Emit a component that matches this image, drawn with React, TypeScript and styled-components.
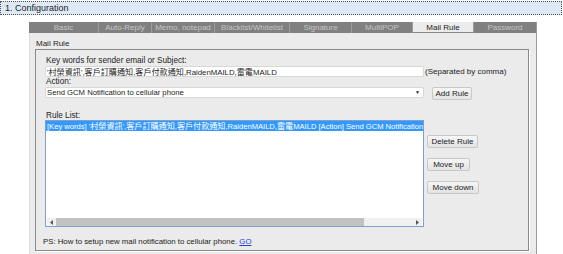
import React from "react";
import styled, { createGlobalStyle } from "styled-components";

const Global = createGlobalStyle`
  html, body { margin: 0; padding: 0; background: #ffffff; }
  body { font-family: "Liberation Sans", Arial, sans-serif; font-size: 8px; color: #222; }
  * { box-sizing: border-box; }
`;

const Page = styled.div`
  width: 563px;
  height: 254px;
  overflow: hidden;
`;

const Header = styled.div`
  width: 562px;
  height: 14px;
  margin-top: 1px;
  border: 1px dotted #555;
  background: #dde9f5;
  padding-left: 4px;
  font-size: 9px;
  line-height: 12px;
  color: #222;
`;

const Main = styled.div`
  padding: 7px 0 0 29px;
`;

const TabBar = styled.div`
  display: flex;
  width: 508px;
  height: 11px;
  background: #808080;
`;

const Tab = styled.div<{ $w: number; $active?: boolean }>`
  width: ${(p) => p.$w}px;
  height: 11px;
  text-align: center;
  line-height: 11px;
  white-space: nowrap;
  overflow: hidden;
  color: ${(p) => (p.$active ? "#222" : "#c6c6c6")};
  background: ${(p) => (p.$active ? "#ececec" : "#808080")};
  border-right: 1px solid #9c9c9c;
  border-bottom: ${(p) => (p.$active ? "1px solid #888" : "none")};
`;

const Panel = styled.div`
  width: 508px;
  height: 230px;
  background: #ebebeb;
  border-left: 1px solid #dcdcdc;
  border-right: 1px solid #9a9a9a;
  padding: 6px 0 0 5px;
`;

const Title = styled.div`
  height: 10px;
  line-height: 10px;
  padding-left: 1px;
`;

const Box = styled.div`
  width: 494px;
  height: 202px;
  border: 1px solid #8a8a8a;
  box-shadow: 1px 1px 0 #ffffff;
  padding: 6px 0 0 9px;
`;

const Label = styled.div<{ $mt?: number }>`
  height: 9px;
  line-height: 9px;
  padding-left: 1px;
  font-size: 8.2px;
  margin-top: ${(p) => p.$mt ?? 0}px;
`;

const Row = styled.div<{ $gap: number; $mt: number }>`
  display: flex;
  align-items: flex-start;
  gap: ${(p) => p.$gap}px;
  margin-top: ${(p) => p.$mt}px;
`;

const Han = styled.span`
  font-family: "Noto Sans CJK TC", sans-serif;
  font-size: 8.1px;
`;

const TextInput = styled.div`
  width: 379px;
  height: 11px;
  background: #fff;
  border: 1px solid #d8d8d8;
  border-radius: 2px;
  padding-left: 1px;
  line-height: 9px;
  font-size: 7.8px;
  white-space: nowrap;
  overflow: hidden;
`;

const Hint = styled.span`
  white-space: nowrap;
  line-height: 11px;
`;

const Select = styled.div`
  width: 379px;
  height: 11px;
  background: #fff;
  border: 1px solid #d8d8d8;
  border-radius: 2px;
  padding: 0 3px 0 1px;
  line-height: 9px;
  font-size: 7.7px;
  display: flex;
  justify-content: space-between;
`;

const Arrow = styled.span`
  font-size: 5px;
  line-height: 9px;
  color: #222;
`;

const Button = styled.div<{ $w: number }>`
  width: ${(p) => p.$w}px;
  height: 13px;
  border: 1px solid #c8c8c8;
  border-radius: 2px;
  background: linear-gradient(#f6f6f6, #e3e3e3);
  line-height: 11px;
  text-align: center;
  white-space: nowrap;
  color: #222;
  flex-shrink: 0;
`;

const ListArea = styled.div`
  display: flex;
  gap: 3px;
`;

const ListBox = styled.div`
  width: 379px;
  height: 107px;
  background: #fff;
  border: 1px solid #7f9fd0;
  flex-shrink: 0;
`;

const Items = styled.div`
  height: 97px;
  overflow: hidden;
`;

const Item = styled.div<{ $selected?: boolean }>`
  height: 10px;
  line-height: 10px;
  white-space: nowrap;
  padding-left: 1px;
  font-size: 7.6px;
  background: ${(p) => (p.$selected ? "#3399ff" : "transparent")};
  color: ${(p) => (p.$selected ? "#fff" : "#222")};
`;

const Scrollbar = styled.div`
  height: 8px;
  margin: 0 1px;
  background: #f0f0f0;
  display: flex;
  align-items: center;
`;

const ScrollArrow = styled.div`
  width: 9px;
  height: 8px;
  flex-shrink: 0;
  display: flex;
  align-items: center;
  justify-content: center;
`;

const Thumb = styled.div`
  width: 308px;
  height: 8px;
  flex-shrink: 0;
  background: #c1c1c1;
`;

const Spacer = styled.div`
  flex: 1;
`;

const Side = styled.div`
  display: flex;
  flex-direction: column;
  gap: 10px;
  padding-top: 15px;
`;

const Footer = styled.div`
  margin-top: 10px;
  margin-left: -2px;
  height: 10px;
  line-height: 10px;
  font-size: 7.8px;
`;

const Link = styled.a`
  color: #1a3fd6;
  text-decoration: underline;
`;

const tabs: [string, number][] = [
  ["Basic", 70],
  ["Auto-Reply", 53],
  ["Memo, notepad", 63],
  ["Blacklist/Whitelist", 75],
  ["Signature", 62],
  ["MultiPOP", 61],
  ["Mail Rule", 61],
  ["Password", 63],
];

const Keywords = () => (
  <>
    '<Han>村榮資訊</Han>',<Han>客戶訂購通知</Han>,<Han>客戶付款通知</Han>,RaidenMAILD,<Han>雷電</Han>MAILD
  </>
);

const Tri = ({ dir }: { dir: "l" | "r" }) => (
  <svg width="3" height="5" viewBox="0 0 3 5">
    <path d={dir === "l" ? "M3 0 L0 2.5 L3 5 Z" : "M0 0 L3 2.5 L0 5 Z"} fill="#555" />
  </svg>
);

export default function App() {
  return (
    <Page>
      <Global />
      <Header>1. Configuration</Header>
      <Main>
        <TabBar>
          {tabs.map(([t, w]) => (
            <Tab key={t} $w={w} $active={t === "Mail Rule"}>
              {t}
            </Tab>
          ))}
        </TabBar>
        <Panel>
          <Title>Mail Rule</Title>
          <Box>
            <Label>Key words for sender email or Subject:</Label>
            <Row $gap={1} $mt={1}>
              <TextInput>
                <Keywords />
              </TextInput>
              <Hint>(Separated by comma)</Hint>
            </Row>
            <Label>Action:</Label>
            <Row $gap={8} $mt={1}>
              <Select>
                <span>Send GCM Notification to cellular phone</span>
                <Arrow>▼</Arrow>
              </Select>
              <Button $w={40}>Add Rule</Button>
            </Row>
            <Label $mt={11}>Rule List:</Label>
            <ListArea>
              <ListBox>
                <Items>
                  <Item $selected>
                    [Key words] <Keywords /> [Action] Send GCM Notification to cellular phone
                  </Item>
                </Items>
                <Scrollbar>
                  <ScrollArrow>
                    <Tri dir="l" />
                  </ScrollArrow>
                  <Thumb />
                  <Spacer />
                  <ScrollArrow>
                    <Tri dir="r" />
                  </ScrollArrow>
                </Scrollbar>
              </ListBox>
              <Side>
                <Button $w={51}>Delete Rule</Button>
                <Button $w={43}>Move up</Button>
                <Button $w={52}>Move down</Button>
              </Side>
            </ListArea>
            <Footer>
              PS: How to setup new mail notification to cellular phone. <Link>GO</Link>
            </Footer>
          </Box>
        </Panel>
      </Main>
    </Page>
  );
}
